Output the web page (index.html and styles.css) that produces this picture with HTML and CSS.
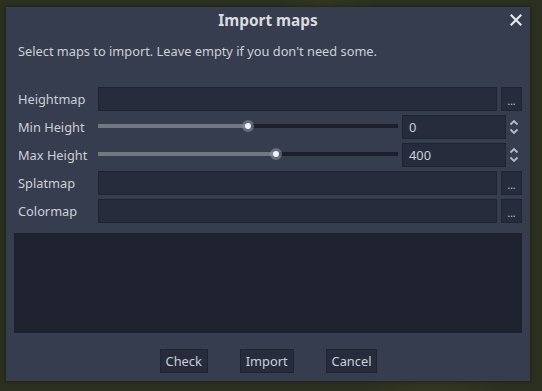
FILE: index.html
```html
<!DOCTYPE html>
<html>
<head>
<meta charset="utf-8">
<link rel="stylesheet" href="styles.css">
</head>
<body>
<div class="desk">
  <div class="dialog">
    <div class="titlebar">
      <span class="title">Import maps</span>
      <svg class="close" width="12" height="12" viewBox="0 0 12 12"><path d="M1.5 1.5 L10.5 10.5 M10.5 1.5 L1.5 10.5" stroke="#e6e8ec" stroke-width="2.2" stroke-linecap="square"/></svg>
    </div>
    <div class="body">
      <p class="hint">Select maps to import. Leave empty if you don't need some.</p>
      <div class="form">
        <label class="lbl">Heightmap</label>
        <div class="field"><div class="input"></div><div class="btn dots">...</div></div>

        <label class="lbl">Min Height</label>
        <div class="field">
          <div class="slider"><div class="fill" style="width:150px"></div><div class="thumb" style="left:150px"></div></div>
          <div class="spin">0</div>
          <svg class="arrows" width="16" height="24" viewBox="0 0 16 24"><path d="M4.5 9.5 L8 6 L11.5 9.5 M4.5 14.5 L8 18 L11.5 14.5" fill="none" stroke="#b9bcc2" stroke-width="1.8"/></svg>
        </div>

        <label class="lbl">Max Height</label>
        <div class="field">
          <div class="slider"><div class="fill" style="width:178px"></div><div class="thumb" style="left:178px"></div></div>
          <div class="spin">400</div>
          <svg class="arrows" width="16" height="24" viewBox="0 0 16 24"><path d="M4.5 9.5 L8 6 L11.5 9.5 M4.5 14.5 L8 18 L11.5 14.5" fill="none" stroke="#b9bcc2" stroke-width="1.8"/></svg>
        </div>

        <label class="lbl">Splatmap</label>
        <div class="field"><div class="input"></div><div class="btn dots">...</div></div>

        <label class="lbl">Colormap</label>
        <div class="field"><div class="input"></div><div class="btn dots">...</div></div>
      </div>
      <div class="log"></div>
      <div class="actions">
        <div class="btn action">Check</div>
        <div class="btn action">Import</div>
        <div class="btn action">Cancel</div>
      </div>
    </div>
  </div>
</div>
</body>
</html>
```
FILE: styles.css
```css
* { box-sizing: border-box; }
html, body { margin: 0; padding: 0; }
body {
  width: 542px;
  height: 391px;
  overflow: hidden;
  background: #2c301f;
  background-image:
    radial-gradient(circle at 20% 30%, #3a3d26 0, transparent 60px),
    radial-gradient(circle at 80% 90%, #363a24 0, transparent 80px),
    radial-gradient(circle at 60% 2%, #33361f 0, transparent 50px);
  font-family: "Noto Sans", "Open Sans", sans-serif;
  color: #cdd0d5;
}
.desk {
  padding: 7px 12px 0 6px;
}
.dialog {
  width: 524px;
  height: 374px;
  background: #363d4f;
  box-shadow: 0 0 4px rgba(0,0,0,0.5);
  display: flex;
  flex-direction: column;
}
.titlebar {
  position: relative;
  height: 26px;
  display: flex;
  align-items: center;
  justify-content: center;
}
.title {
  font-weight: bold;
  font-size: 15.4px;
  color: #d9dbdf;
}
.close {
  position: absolute;
  right: 8px;
  top: 7px;
}
.body {
  flex: 1;
  padding: 0 8px 8px 8px;
  display: flex;
  flex-direction: column;
}
.hint {
  margin: 0;
  padding: 8px 4px 0;
  font-size: 12.8px;
  line-height: 20px;
  height: 54px;
}
.form {
  display: grid;
  grid-template-columns: 84px 1fr;
  row-gap: 4px;
}
.lbl {
  font-size: 12.8px;
  line-height: 24px;
  padding-left: 4px;
}
.field {
  display: flex;
  gap: 4px;
  height: 24px;
  align-items: center;
}
.input {
  flex: 1;
  height: 24px;
  background: #262c3b;
  border: 1px solid #1f2431;
}
.btn {
  background: #262c3b;
  border: 1px solid #1f2431;
  font-size: 12.8px;
  color: #cdd0d5;
  display: flex;
  align-items: center;
  justify-content: center;
  height: 24px;
}
.dots {
  width: 21px;
  font-size: 10px;
  padding-top: 4px;
}
.slider {
  position: relative;
  flex: 1;
  height: 4px;
  margin-top: -2px;
  background: #1c202a;
}
.fill {
  height: 4px;
  background: #717884;
}
.thumb {
  position: absolute;
  top: 2px;
  width: 12px;
  height: 12px;
  margin-left: -6px;
  margin-top: -6px;
  border-radius: 50%;
  background: rgba(140,146,156,0.55);
}
.thumb::after {
  content: "";
  position: absolute;
  left: 3px;
  top: 3px;
  width: 6px;
  height: 6px;
  border-radius: 50%;
  background: #f2f3f5;
}
.spin {
  width: 104px;
  height: 24px;
  background: #262c3b;
  border: 1px solid #1f2431;
  font-size: 12.8px;
  line-height: 22px;
  padding-left: 6px;
  color: #cdd0d5;
}
.arrows {
  width: 16px;
  margin-left: -4px;
}
.log {
  margin-top: 10px;
  height: 100px;
  background: #1f2330;
  border: 1px solid #1c2029;
}
.actions {
  margin-top: auto;
  display: flex;
  justify-content: center;
  gap: 32px;
  padding-left: 1px;
}
.action {
  padding: 0 5px;
  height: 24px;
}
```
